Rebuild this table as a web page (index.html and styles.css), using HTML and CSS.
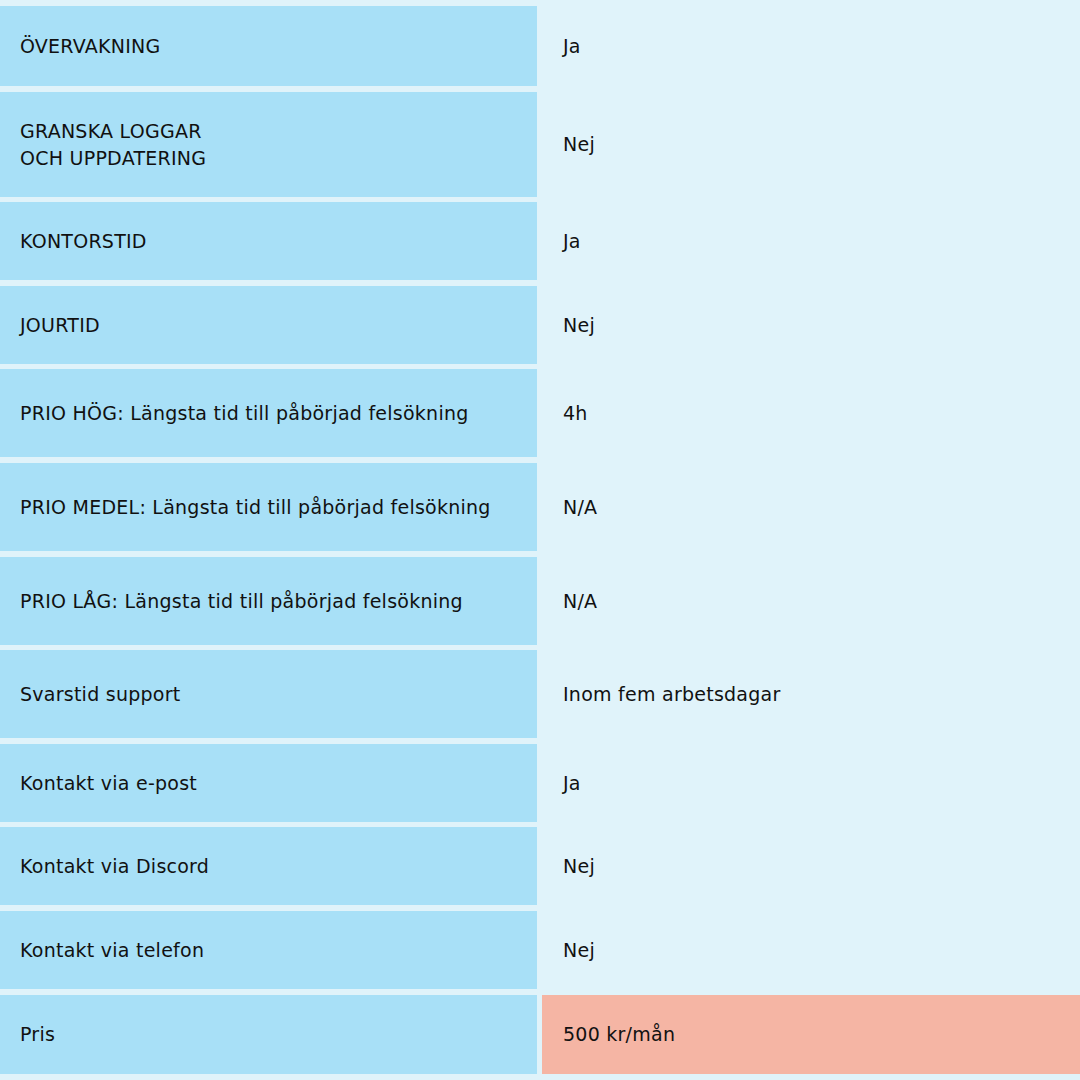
FILE: index.html
```html
<!DOCTYPE html>
<html lang="sv">
<head>
<meta charset="utf-8">
<title>Tjänstenivå</title>
<link rel="stylesheet" href="styles.css">
</head>
<body>
<div class="table">
  <div class="label">ÖVERVAKNING</div><div class="value">Ja</div>
  <div class="label">GRANSKA LOGGAR<br>OCH UPPDATERING</div><div class="value">Nej</div>
  <div class="label">KONTORSTID</div><div class="value">Ja</div>
  <div class="label">JOURTID</div><div class="value">Nej</div>
  <div class="label">PRIO HÖG: Längsta tid till påbörjad felsökning</div><div class="value">4h</div>
  <div class="label">PRIO MEDEL: Längsta tid till påbörjad felsökning</div><div class="value">N/A</div>
  <div class="label">PRIO LÅG: Längsta tid till påbörjad felsökning</div><div class="value">N/A</div>
  <div class="label">Svarstid support</div><div class="value">Inom fem arbetsdagar</div>
  <div class="label">Kontakt via e-post</div><div class="value">Ja</div>
  <div class="label">Kontakt via Discord</div><div class="value">Nej</div>
  <div class="label">Kontakt via telefon</div><div class="value">Nej</div>
  <div class="label">Pris</div><div class="value price">500 kr/mån</div>
</div>
</body>
</html>
```
FILE: styles.css
```css
html, body {
  margin: 0;
  padding: 0;
  background: #e0f3fa;
}
body {
  width: 1080px;
  height: 1080px;
  overflow: hidden;
  font-family: "DejaVu Sans", "Open Sans", sans-serif;
  font-size: 19px;
  letter-spacing: 0.25px;
  color: #111;
}
.table {
  display: grid;
  grid-template-columns: 537px 1fr;
  grid-template-rows: 80px 105px 78px 78px 88px 88px 88px 88px 78px 78px 78px 79px;
  column-gap: 5px;
  row-gap: 5.6px;
  padding: 6px 0 6px 0;
}
.label, .value {
  display: flex;
  align-items: center;
  line-height: 27px;
  padding-top: 1px;
}
.label {
  background: #a8e0f7;
  padding-left: 20px;
}
.value {
  padding-left: 21px;
}
.price {
  background: #f5b5a4;
}
```
